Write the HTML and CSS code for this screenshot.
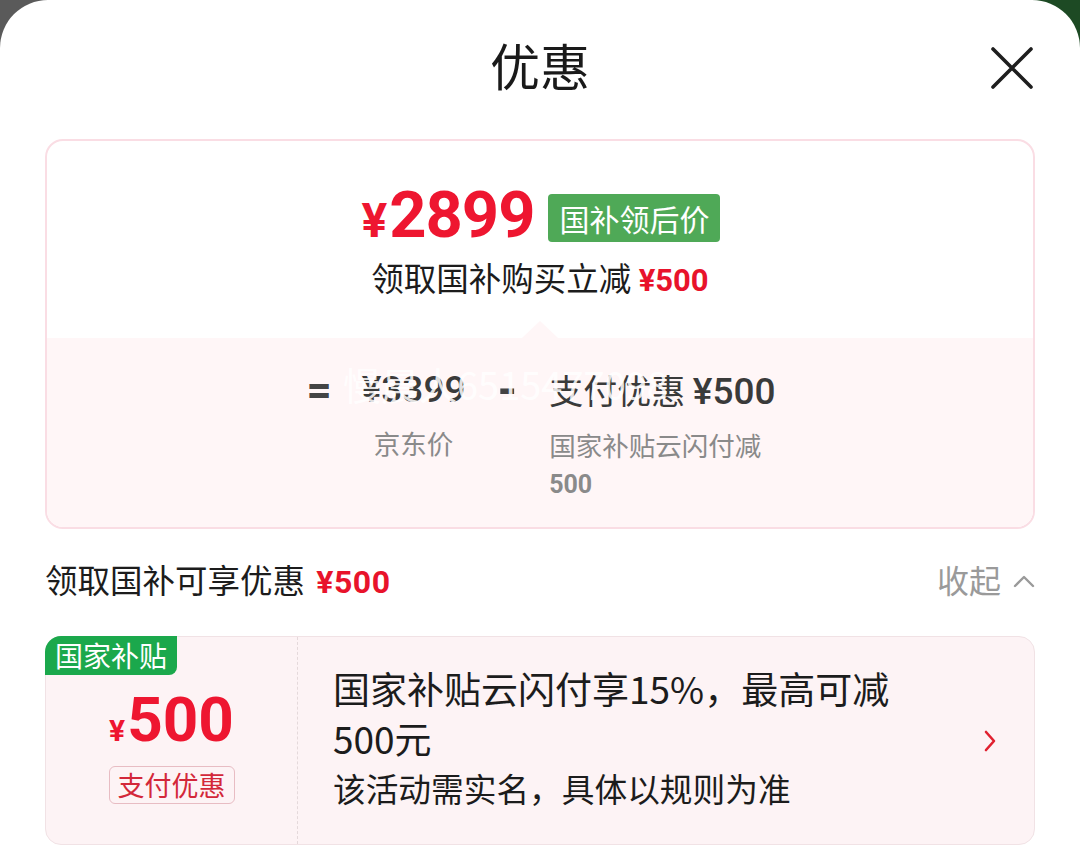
FILE: index.html
```html
<!DOCTYPE html>
<html lang="zh">
<head>
<meta charset="utf-8">
<link rel="stylesheet" href="styles.css">
</head>
<body>
<div class="sheet">
  <header class="header">
    <span></span>
    <h1 class="title">优惠</h1>
    <button class="close" aria-label="关闭">
      <svg width="46" height="46" viewBox="0 0 46 46"><path d="M4 4 L42 42 M42 4 L4 42" stroke="#1e1e1e" stroke-width="3.6" stroke-linecap="round" fill="none"/></svg>
    </button>
  </header>

  <section class="summary">
    <div class="summary-top">
      <div class="price-row">
        <span class="price"><span class="yen">¥</span>2899</span>
        <span class="badge">国补领后价</span>
      </div>
      <div class="sub">领取国补购买立减 <span class="red-num">¥500</span></div>
    </div>
    <div class="summary-bottom">
      <div class="formula">
        <span class="op">=</span>
        <div class="col col-center">
          <div class="fval num">¥3399</div>
          <div class="fdesc">京东价</div>
        </div>
        <span class="op op-minus">-</span>
        <div class="col">
          <div class="fval">支付优惠 <span class="num">¥500</span></div>
          <div class="fdesc narrow">国家补贴云闪付减<span class="num-grey">500</span></div>
        </div>
      </div>
      <div class="watermark">慢晨人6515477098</div>
    </div>
  </section>

  <div class="section-head">
    <div class="section-title">领取国补可享优惠 <span class="red-num big">¥500</span></div>
    <div class="collapse">收起
      <svg width="22" height="14" viewBox="0 0 22 14"><path d="M2 12 L11 3 L20 12" stroke="#9a9a9a" stroke-width="2.4" fill="none" stroke-linecap="round" stroke-linejoin="round"/></svg>
    </div>
  </div>

  <div class="coupon">
    <span class="tag">国家补贴</span>
    <div class="coupon-left">
      <div class="amount"><span class="yen-s">¥</span>500</div>
      <span class="kind">支付优惠</span>
    </div>
    <div class="coupon-right">
      <div class="c-text">
        <p class="c-title">国家补贴云闪付享15%，最高可减500元</p>
        <p class="c-note">该活动需实名，具体以规则为准</p>
      </div>
      <svg class="chev" width="16" height="24" viewBox="0 0 16 24"><path d="M4 3 L12 12 L4 21" stroke="#e0202f" stroke-width="2.6" fill="none" stroke-linecap="round" stroke-linejoin="round"/></svg>
    </div>
  </div>
</div>
</body>
</html>
```

FILE: styles.css
```css
* { box-sizing: border-box; }
html, body { margin: 0; padding: 0; }
body {
  background: linear-gradient(to right, #5a5a5a 0%, #5a5a5a 50%, #1d4a24 50%, #1d4a24 100%);
  font-family: "Noto Sans CJK SC", "Noto Sans", sans-serif;
  color: #1c1c1c;
  width: 1080px;
  height: 859px;
  overflow: hidden;
}
.sheet {
  background: #fff;
  border-radius: 48px 48px 0 0;
  height: 859px;
  padding: 0 45px;
}
.header {
  height: 139px;
  display: grid;
  grid-template-columns: 1fr auto 1fr;
  align-items: center;
  padding-bottom: 12px;
}
.title {
  margin: 0;
  font-size: 50px;
  font-weight: 400;
  line-height: 1;
  color: #1a1a1a;
}
.close {
  justify-self: end;
  background: none;
  border: 0;
  padding: 0;
  margin-right: 0;
  margin-top: 8px;
  display: flex;
}

.summary {
  border: 2px solid #fadde4;
  border-radius: 18px;
  overflow: hidden;
  height: 390px;
  display: flex;
  flex-direction: column;
}
.summary-top {
  height: 197px;
  padding-top: 42px;
  display: flex;
  flex-direction: column;
  align-items: center;
}
.price-row {
  display: flex;
  align-items: center;
  gap: 14px;
  padding-left: 2px;
}
.price {
  font-family: Roboto, "Liberation Sans", sans-serif;
  font-weight: 700;
  font-size: 65px;
  line-height: 64px;
  color: #ee1630;
  letter-spacing: -1px;
}
.yen { font-size: 48px; margin-right: 3px; }
.badge {
  background: #4fa957;
  color: #fff;
  font-size: 30px;
  line-height: 48px;
  height: 48px;
  padding: 0 11px;
  border-radius: 4px;
}
.sub {
  margin-top: 4px;
  font-size: 32.5px;
  line-height: 40px;
  color: #1c1c1c;
}
.red-num {
  font-family: Roboto, "Liberation Sans", sans-serif;
  font-weight: 700;
  font-size: 31px;
  color: #e8132b;
}
.red-num.big { font-size: 32px; margin-left: 4px; letter-spacing: 0.5px; }
.summary-bottom {
  flex: 1;
  background: #fff6f7;
  position: relative;
  padding-top: 30px;
}
.summary-bottom::before {
  content: "";
  position: absolute;
  top: -17px;
  left: 50%;
  margin-left: -18px;
  border-left: 18px solid transparent;
  border-right: 18px solid transparent;
  border-bottom: 17px solid #fff6f7;
}
.formula {
  display: flex;
  justify-content: center;
  align-items: flex-start;
  gap: 30px;
  padding-left: 2px;
}
.op {
  font-family: Roboto, "Liberation Sans", sans-serif;
  font-weight: 700;
  font-size: 44px;
  line-height: 44px;
  color: #444;
}
.op-minus { font-size: 50px; margin: 0 2px; }
.col { display: flex; flex-direction: column; }
.col-center { align-items: center; }
.fval {
  font-size: 34px;
  line-height: 44px;
  color: #3a3a3a;
  white-space: nowrap;
}
.num, .fval.num {
  font-family: Roboto, "Liberation Sans", sans-serif;
  font-weight: 500;
  font-size: 37px;
}
.fdesc {
  margin-top: 12px;
  font-size: 26.5px;
  line-height: 37px;
  color: #8a8a8a;
}
.narrow { width: 224px; }
.num-grey {
  font-family: Roboto, "Liberation Sans", sans-serif;
  font-weight: 700;
  font-size: 25px;
}
.watermark {
  position: absolute;
  left: 296px;
  top: 18px;
  font-size: 38px;
  color: rgba(255, 255, 255, 0.85);
  white-space: nowrap;
  pointer-events: none;
}

.section-head {
  height: 107px;
  display: flex;
  align-items: center;
  justify-content: space-between;
  padding-bottom: 8px;
}
.section-title {
  font-size: 32.5px;
  color: #1c1c1c;
}
.collapse {
  font-size: 32px;
  color: #9a9a9a;
  display: flex;
  align-items: center;
  gap: 12px;
}
.collapse svg { margin-top: 4px; }

.coupon {
  position: relative;
  height: 209px;
  background: #fdf3f5;
  border: 1px solid #f1e2e5;
  border-radius: 16px;
  display: flex;
}
.tag {
  position: absolute;
  left: -1px;
  top: -1px;
  background: #1ba84c;
  color: #fff;
  font-size: 28px;
  line-height: 38px;
  height: 39px;
  padding: 0 10px;
  border-radius: 16px 0 8px 0;
}
.coupon-left {
  width: 252px;
  border-right: 1px dashed #e5d9db;
  display: flex;
  flex-direction: column;
  align-items: center;
  padding-top: 52px;
}
.amount {
  font-family: Roboto, "Liberation Sans", sans-serif;
  font-weight: 700;
  font-size: 62px;
  line-height: 62px;
  color: #ee1630;
}
.yen-s { font-size: 30px; margin-right: 2px; }
.kind {
  margin-top: 4px;
  font-size: 27px;
  line-height: 36px;
  color: #d3283a;
  border: 1px solid #e8bcc3;
  border-radius: 6px;
  padding: 0 8px;
}
.coupon-right {
  flex: 1;
  display: flex;
  align-items: center;
  padding-left: 35px;
  padding-right: 36px;
}
.c-text { flex: 1; margin-top: -5px; }
.c-title {
  margin: 0;
  font-size: 37px;
  line-height: 50px;
  color: #1c1c1c;
  width: 575px;
}
.c-note {
  margin: 0;
  font-size: 32.7px;
  line-height: 50px;
  color: #1c1c1c;
}
.chev { flex: none; }
```
